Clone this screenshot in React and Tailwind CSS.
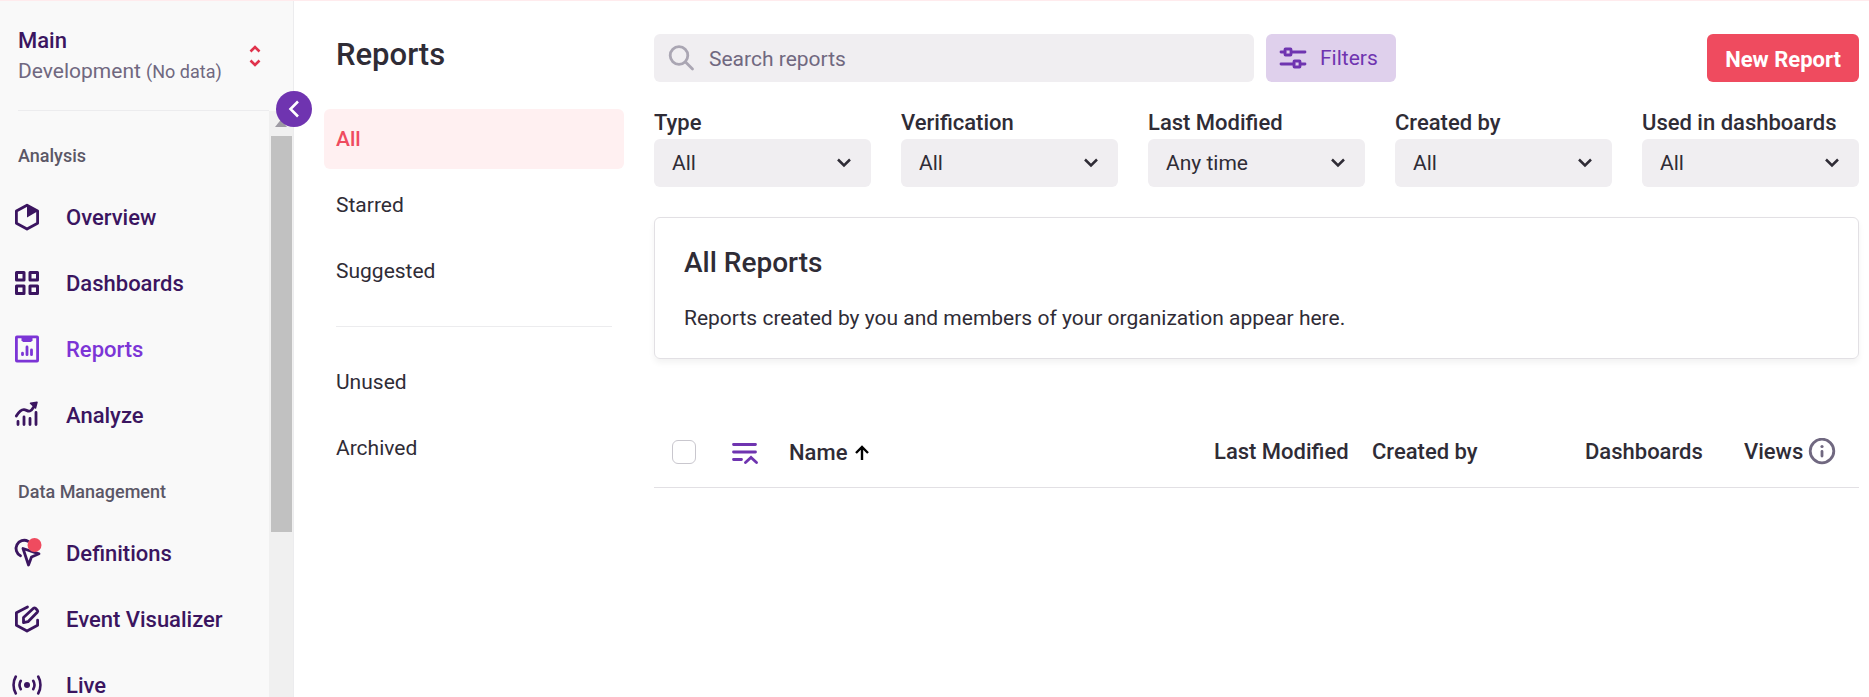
import React from "react";

const svgProps = { fill: "none", stroke: "currentColor", "aria-hidden": true };

function OverviewIcon() {
  return (
    <svg width="30" height="30" viewBox="0 0 30 30" strokeWidth="2.8" strokeLinejoin="round" {...svgProps}>
      <path d="M15 3.2 25.6 9v12.2L15 27 4.4 21.200V9z" />
      <path d="M15 3v12.400L26.500 8.800z" fill="currentColor" stroke="none" />
    </svg>
  );
}

function DashboardsIcon() {
  return (
    <svg width="30" height="30" viewBox="0 0 30 30" strokeWidth="3" strokeLinejoin="round" {...svgProps}>
      <rect x="4.500" y="4.500" width="7.500" height="7.500" />
      <rect x="18" y="4.500" width="7.500" height="7.500" />
      <rect x="4.500" y="18" width="7.500" height="7.500" />
      <rect x="18" y="18" width="7.500" height="7.500" />
    </svg>
  );
}

function ReportsIcon() {
  return (
    <svg width="30" height="30" viewBox="0 0 30 30" strokeLinecap="round" {...svgProps}>
      <rect x="4.400" y="2.900" width="21.200" height="24.200" rx="0.500" strokeWidth="2.800" />
      <path d="M9.500 3h11v3.200l-1.500 1.800h-8L9.500 6.200z" fill="currentColor" stroke="none" />
      <path d="M10.500 19.200v1.500M15 13v7.700M19.500 16v4.700" strokeWidth="2.800" />
    </svg>
  );
}

function AnalyzeIcon() {
  return (
    <svg width="30" height="30" viewBox="0 0 30 30" strokeLinecap="round" strokeLinejoin="round" {...svgProps}>
      <path d="M4.300 16c3-5 5.500-6.500 7.700-6.400s3.500 2 6 1.400c2-.5 2.800-3 4-4.500" strokeWidth="2.800" />
      <path d="M18.500 3.200 25 2.200l-1.500 5.800z" fill="currentColor" strokeWidth="1.500" />
      <path d="M6 21.500v3M12 17v7.500M18 18.500v6M24 12.500v12" strokeWidth="2.800" />
    </svg>
  );
}

function DefinitionsIcon() {
  return (
    <svg width="30" height="30" viewBox="0 0 30 30" strokeLinecap="round" strokeLinejoin="round" {...svgProps}>
      <path d="M16 3.200A8 8 0 1 0 8.500 17.800" strokeWidth="2.800" />
      <path d="M11 10.500 16.500 27l3-8 7.500-3.200z" strokeWidth="2.800" />
      <circle cx="22.500" cy="7" r="7" fill="#ef4b5f" stroke="none" />
    </svg>
  );
}

function VisualizerIcon() {
  return (
    <svg width="30" height="30" viewBox="0 0 30 30" strokeWidth="2.800" strokeLinecap="round" strokeLinejoin="round" {...svgProps}>
      <path d="M15.500 3 4.400 8.800v12.400L15 27l10.600-5.800v-5" />
      <path d="M11.500 18.700v-5.200L21.500 4.300a1.500 1.500 0 0 1 2 0l1.800 1.900a1.500 1.500 0 0 1 0 2L16 17.700z" />
    </svg>
  );
}

function LiveIcon() {
  return (
    <svg width="30" height="30" viewBox="0 0 30 30" strokeWidth="2.600" strokeLinecap="round" {...svgProps}>
      <circle cx="15" cy="15" r="3" fill="currentColor" stroke="none" />
      <path d="M3.800 6.500c-3 5-3 12 0 17M26.200 6.500c3 5 3 12 0 17M8.800 10.800c-1.600 2.600-1.600 5.800 0 8.400M21.200 10.800c1.600 2.600 1.600 5.800 0 8.400" />
    </svg>
  );
}

function ChevronDown() {
  return (
    <svg width="14" height="10" viewBox="0 0 14 10" strokeWidth="2.500" {...svgProps}>
      <path d="M1 1.500 7 7.500l6-6" />
    </svg>
  );
}

const sections = [
  {
    title: "Analysis",
    items: [
      { label: "Overview", Icon: OverviewIcon },
      { label: "Dashboards", Icon: DashboardsIcon },
      { label: "Reports", Icon: ReportsIcon, active: true },
      { label: "Analyze", Icon: AnalyzeIcon },
    ],
  },
  {
    title: "Data Management",
    items: [
      { label: "Definitions", Icon: DefinitionsIcon },
      { label: "Event Visualizer", Icon: VisualizerIcon },
      { label: "Live", Icon: LiveIcon },
    ],
  },
];

function Sidebar() {
  return (
    <aside className="relative flex h-full w-[294px] shrink-0 flex-col border-r border-[#ececee] bg-[#f9f9f9]">
      <button type="button" className="mr-6 ml-[18px] flex h-[110px] shrink-0 items-center justify-between border-b border-[#ececee] text-left">
        <span className="flex flex-col">
          <span className="text-[22px] leading-[30px] font-medium text-[#3b1560]">Main</span>
          <span className="leading-[30px] text-[#706880]">
            Development <span className="text-lg">(No data)</span>
          </span>
        </span>
        <svg width="14" height="24" viewBox="0 0 14 24" strokeWidth="2.600" className="mr-[7px] text-[#e0334c]" {...svgProps}>
          <path d="M2.500 7.500 7 3l4.500 4.500M2.500 16.500 7 21l4.500-4.500" />
        </svg>
      </button>
      <div className="flex min-h-0 flex-1">
        <nav className="min-w-0 flex-1 overflow-hidden pt-px">
          {sections.map((s) => (
            <section key={s.title}>
              <h2 className="pt-8 pb-4 pl-[18px] text-lg leading-6 font-medium text-[#5b5766]">{s.title}</h2>
              {s.items.map(({ label, Icon, active }) => (
                <a
                  key={label}
                  href="#"
                  className={`flex h-[66px] items-center gap-6 pl-3 text-[22px] font-medium ${active ? "text-[#7c35d6]" : "text-[#3b1560]"}`}
                >
                  <Icon />
                  {label}
                </a>
              ))}
            </section>
          ))}
        </nav>
        <div className="flex w-6 flex-col items-center bg-[#f0f0f0]" aria-hidden="true">
          <svg width="12" height="25" viewBox="0 0 12 25" fill="#9d9aa3">
            <path d="M6 8.500 12 16H0z" />
          </svg>
          <div className="h-[396px] w-[21px] bg-[#c1c1c1]" />
        </div>
      </div>
      <button type="button" aria-label="Collapse sidebar" className="absolute top-[90px] -right-[19px] flex size-9 items-center justify-center rounded-full bg-[#6f34b0] text-white">
        <svg width="12" height="18" viewBox="0 0 12 18" strokeWidth="2.600" {...svgProps}>
          <path d="M10 1.500 2.500 9l7.500 7.500" />
        </svg>
      </button>
    </aside>
  );
}

function ViewLink({ label, active }) {
  return (
    <a href="#" className={`flex h-[60px] items-center rounded-md px-3 pt-0.5 ${active ? "bg-[#fff0f1] font-medium text-[#ef4b5f]" : ""}`}>
      {label}
    </a>
  );
}

function FilterSelect({ id, label, value }) {
  return (
    <div>
      <label htmlFor={id} className="block text-[22px] leading-[33px] font-medium">
        {label}
      </label>
      <div className="relative">
        <select id={id} className="h-12 w-full appearance-none rounded-md bg-[#f0eef1] pt-0.5 pr-12 pl-[18px]">
          <option>{value}</option>
        </select>
        <span className="pointer-events-none absolute inset-y-0 right-5 flex items-center">
          <ChevronDown />
        </span>
      </div>
    </div>
  );
}

const filters = [
  { id: "type", label: "Type", value: "All" },
  { id: "verification", label: "Verification", value: "All" },
  { id: "modified", label: "Last Modified", value: "Any time" },
  { id: "creator", label: "Created by", value: "All" },
  { id: "dashboards", label: "Used in dashboards", value: "All" },
];

export default function App() {
  return (
    <div className="flex h-screen flex-col overflow-hidden border-t border-[#ffebed] bg-white font-['Roboto',sans-serif] text-[21px] text-[#2f2c36]">
      <div className="flex min-h-0 flex-1">
        <Sidebar />
        <aside className="ml-[30px] w-[300px] shrink-0">
          <h1 className="flex h-[108px] items-center px-3 text-[31px] font-medium">Reports</h1>
          <nav className="flex flex-col gap-1.5">
            <ViewLink label="All" active />
            <ViewLink label="Starred" />
            <ViewLink label="Suggested" />
            <hr className="mx-3 my-[19px] border-[#ececee]" />
            <ViewLink label="Unused" />
            <ViewLink label="Archived" />
          </nav>
        </aside>
        <main className="mr-2.5 ml-[30px] min-w-0 flex-1 pt-[33px]">
          <div className="flex h-12 items-stretch gap-3">
            <div className="flex w-[600px] items-center gap-[13px] rounded-md bg-[#f0eef1] pl-3.5">
              <svg width="28" height="28" viewBox="0 0 28 28" strokeWidth="2.800" strokeLinecap="round" className="text-[#aaa6b3]" {...svgProps}>
                <circle cx="11" cy="11.500" r="8.800" />
                <path d="M17.500 18 24.500 25" />
              </svg>
              <input
                type="search"
                aria-label="Search reports"
                placeholder="Search reports"
                className="h-full min-w-0 flex-1 bg-transparent pt-0.5 outline-none placeholder:text-[#706880]"
              />
            </div>
            <button type="button" className="flex items-center gap-3 rounded-md bg-[#dfd0ec] pr-[18px] pl-3 text-[#6f34b0]">
              <svg width="30" height="30" viewBox="0 0 30 30" strokeWidth="2.800" strokeLinecap="round" {...svgProps}>
                <path d="M3 9h4M14 9h13M3 21h13M23 21h4" />
                <rect x="7" y="6" width="6" height="6" rx="0.500" />
                <rect x="16" y="18" width="6" height="6" rx="0.500" />
              </svg>
              <span className="pt-0.5">Filters</span>
            </button>
            <button type="button" className="ml-auto rounded-md bg-[#ef4b5f] px-[18px] pt-0.5 text-[22px] font-bold text-white">
              New Report
            </button>
          </div>
          <div className="mt-6 grid grid-cols-5 gap-[30px]">
            {filters.map((f) => (
              <FilterSelect key={f.id} {...f} />
            ))}
          </div>
          <section className="mt-[30px] rounded-md border border-[#e2e0e4] px-[29px] py-6 shadow-[0_4px_6px_rgba(0,0,0,0.05)]">
            <h2 className="text-[28px] leading-[42px] font-medium">All Reports</h2>
            <p className="mt-[18px] leading-8">Reports created by you and members of your organization appear here.</p>
          </section>
          <table className="mt-[58px] w-full table-fixed border-b border-[#e2e0e4]">
            <colgroup>
              <col className="w-[78px]" />
              <col className="w-[57px]" />
              <col />
              <col className="w-[158px]" />
              <col className="w-[213px]" />
              <col className="w-[159px]" />
              <col className="w-[115px]" />
            </colgroup>
            <thead>
              <tr className="h-[70px] text-left text-[22px]">
                <th className="pl-[18px]">
                  <input type="checkbox" aria-label="Select all reports" className="block size-6 appearance-none rounded-md border border-[#c9c7ce] bg-white" />
                </th>
                <th>
                  <button type="button" aria-label="Collapse rows" className="block text-[#6f34b0]">
                    <svg width="28" height="24" viewBox="0 0 28 24" strokeWidth="2.800" strokeLinecap="round" {...svgProps}>
                      <path d="M1.500 4.500h22M1.500 12h22M1.500 19.500h8M13.500 22.500l5.500-5 5.500 5" />
                    </svg>
                  </button>
                </th>
                <th className="pt-0.5 font-medium">
                  <button type="button" className="flex items-center gap-2">
                    Name
                    <svg width="14" height="16" viewBox="0 0 14 16" strokeWidth="2.400" className="text-black" {...svgProps}>
                      <path d="M7 15V2M1 8l6-6 6 6" />
                    </svg>
                  </button>
                </th>
                <th className="font-medium">Last Modified</th>
                <th className="font-medium">Created by</th>
                <th className="font-medium">Dashboards</th>
                <th className="font-medium">
                  <span className="flex items-center gap-[5px]">
                    Views
                    <svg width="28" height="28" viewBox="0 0 28 28" className="text-[#706880]" {...svgProps}>
                      <circle cx="14" cy="13" r="11.800" strokeWidth="2.800" />
                      <path d="M14 13.500v4.500" strokeWidth="2.800" strokeLinecap="round" />
                      <circle cx="14" cy="8.500" r="1.600" fill="currentColor" stroke="none" />
                    </svg>
                  </span>
                </th>
              </tr>
            </thead>
          </table>
        </main>
      </div>
    </div>
  );
}
